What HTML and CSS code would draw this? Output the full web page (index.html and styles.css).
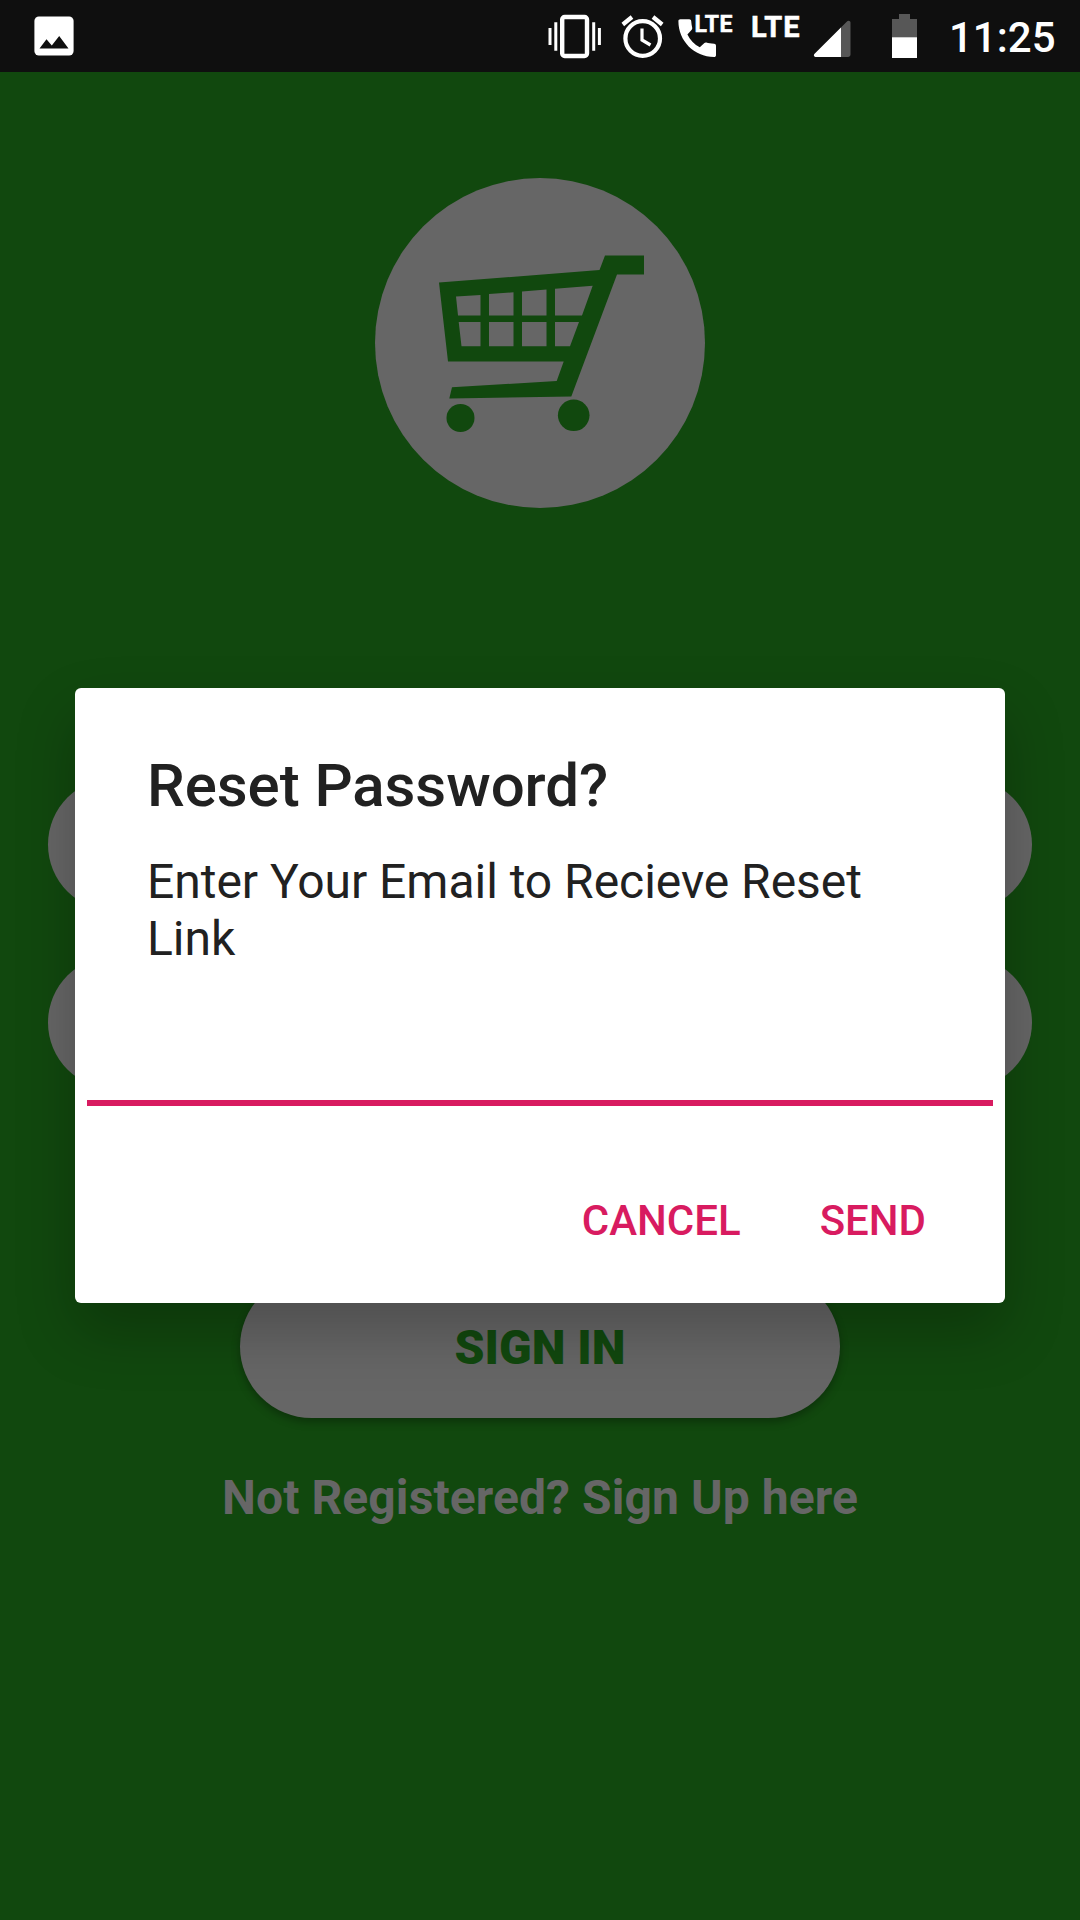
FILE: index.html
```html
<!DOCTYPE html>
<html lang="en">
<head>
<meta charset="utf-8">
<title>Reset Password</title>
<link rel="stylesheet" href="styles.css">
</head>
<body>
<div class="screen">
  <header class="status">
    <svg class="status-photo" width="40" height="40" viewBox="0 0 40 40">
      <rect x=".4" y=".4" width="39.2" height="39.2" rx="4.5" fill="#fff"/>
      <path d="M5.5 32.5 12.5 23.2 17.8 29.5 25.2 20 34.5 32.5z" fill="#0f0f0f"/>
    </svg>
    <svg class="status-icons" width="265" height="72" viewBox="545 0 265 72">
      <g fill="none" stroke="#fff">
        <rect x="562.2" y="17" width="24.8" height="39" rx="2.5" stroke-width="4.4"/>
        <path d="M550 28v17M555.8 22.3v28.5M593.7 22.3v28.5M599.4 28v17" stroke-width="3"/>
        <circle cx="642.7" cy="38.5" r="17.3" stroke-width="4.2"/>
        <path d="M642 28.500v11.500l8.500 5" stroke-width="3.2"/>
        <path d="M622.800 24.500l9.200-7.500M653 17l9.200 7.500" stroke-width="4.200"/>
      </g>
      <path d="M680.300 19.300h9c1 0 1.800.8 1.900 1.800.2 2.300.5 4.500 1 6.600.2.700 0 1.500-.5 2l-4.300 4.800c2.800 5.700 7 10 12.400 12.800l4.600-4.200c.5-.5 1.200-.7 1.900-.5 2.200.7 4.500 1.100 7.900 1.200 1 .1 1.800.8 1.800 1.900v9.500c0 1-.8 1.800-1.800 1.800-20.200 0-35.800-16-35.800-35.900 0-1 .8-1.800 1.900-1.800z" fill="#fff"/>
      <text class="lte" x="694.500" y="32" font-size="23" textLength="38">LTE</text>
      <text class="lte" x="751" y="36.700" font-size="29" textLength="48.500">LTE</text>
    </svg>
    <svg class="status-levels" width="110" height="72" viewBox="810 0 110 72">
      <path d="M815.500 57c-1.500 0-2.200-1.800-1.100-2.900l32.800-32.800c1.200-1.200 3.300-.4 3.300 1.300v32c0 1.300-1.100 2.400-2.400 2.400z" fill="#575757"/>
      <path d="M815.500 57c-1.500 0-2.200-1.800-1.100-2.900L841 27.500V57z" fill="#fff"/>
      <path d="M899 14h11v5h7v19h-25V19h7z" fill="#575757"/>
      <path d="M892 37.300h25V58h-25z" fill="#fff"/>
    </svg>
    <span class="clock">11:25</span>
  </header>

  <main class="login">
    <svg class="logo" width="330" height="330" viewBox="375 178 330 330">
      <circle cx="540" cy="343" r="165" fill="#666"/>
      <path fill="#11480e" fill-rule="evenodd" d="M439 282.500 599.500 270 605 255.500h39V274.500h-27L571.300 396.500 449.300 398.500 452 387.300 556.700 381 563.700 361.500H448zM456 296.500 458 315.500H480.500V295zM489 294V315.500H513.500V292.300zM522 291.500V315.500H546.500V289.500zM555 288.700V315.500H582L592.700 285.700zM458.700 322 461.500 346.300H480.500V322zM489 322V346.300H513.500V322zM522 322V346.300H546.500V322zM555 322V346.300H570L579 322z"/>
      <circle cx="460.500" cy="418" r="14" fill="#11480e"/>
      <circle cx="573.700" cy="415.300" r="15.800" fill="#11480e"/>
    </svg>
    <div class="field"></div>
    <div class="field"></div>
    <div class="signin">SIGN IN</div>
    <div class="signup">Not Registered? Sign Up here</div>
  </main>

  <div class="overlay">
    <section class="dialog" role="dialog">
      <h1 class="title">Reset Password?</h1>
      <p class="message">Enter Your Email to Recieve Reset Link</p>
      <div class="input"></div>
      <div class="actions">
        <span>CANCEL</span>
        <span>SEND</span>
      </div>
    </section>
  </div>
</div>
</body>
</html>
```
FILE: styles.css
```css
* {
  box-sizing: border-box;
}

body {
  margin: 0;
  font-family: Roboto, sans-serif;
}

.screen {
  position: relative;
  width: 1080px;
  height: 1920px;
  overflow: hidden;
  background: #11480e;
}

.status {
  display: flex;
  align-items: center;
  height: 72px;
  padding-left: 34px;
  background: #0f0f0f;
}

.status svg {
  flex: none;
}

.status-icons {
  margin-left: 471px;
}

.lte {
  fill: #fff;
  stroke: #fff;
  stroke-width: .5px;
  font-weight: 700;
}

.clock {
  margin-left: 29px;
  color: #fff;
  font-size: 42px;
  font-weight: 500;
  line-height: 72px;
  padding-top: 3px;
  white-space: nowrap;
}

.login {
  display: flex;
  flex-direction: column;
  align-items: center;
  padding: 106px 48px 0;
}

.logo {
  margin-bottom: 270px;
}

.field {
  width: 100%;
  height: 133px;
  margin-bottom: 45px;
  border-radius: 67px;
  background: #666;
}

.signin {
  width: 600px;
  height: 143px;
  margin-top: 141px;
  border-radius: 72px;
  background: #666;
  box-shadow: 0 4px 9px rgba(0, 0, 0, .3);
  color: #11480e;
  font-size: 48px;
  font-weight: 900;
  line-height: 145px;
  text-align: center;
}

.signup {
  margin-top: 51px;
  color: #666;
  font-size: 48px;
  font-weight: 700;
  letter-spacing: .08px;
  line-height: 57px;
  white-space: nowrap;
}

.overlay {
  position: absolute;
  inset: 72px 0 0;
  display: flex;
  flex-direction: column;
  align-items: center;
  padding-top: 616px;
}

.dialog {
  width: 930px;
  height: 615px;
  border-radius: 6px;
  background: #fff;
  box-shadow: 0 28px 60px rgba(0, 0, 0, .24);
  color: #212121;
}

.title {
  margin: 0;
  padding: 62px 72px 0;
  font-size: 60px;
  font-weight: 500;
  letter-spacing: -.07px;
  line-height: 71px;
}

.message {
  margin: 0;
  padding: 32px 72px 0;
  font-size: 48px;
  letter-spacing: -.03px;
  line-height: 57px;
}

.input {
  height: 139px;
  margin: 0 12px;
  border-bottom: 6px solid #d81b60;
}

.actions {
  display: flex;
  justify-content: flex-end;
  gap: 79px;
  padding: 90px 79px 0 0;
  color: #d81b60;
  font-size: 42px;
  font-weight: 500;
  line-height: 50px;
}
```
